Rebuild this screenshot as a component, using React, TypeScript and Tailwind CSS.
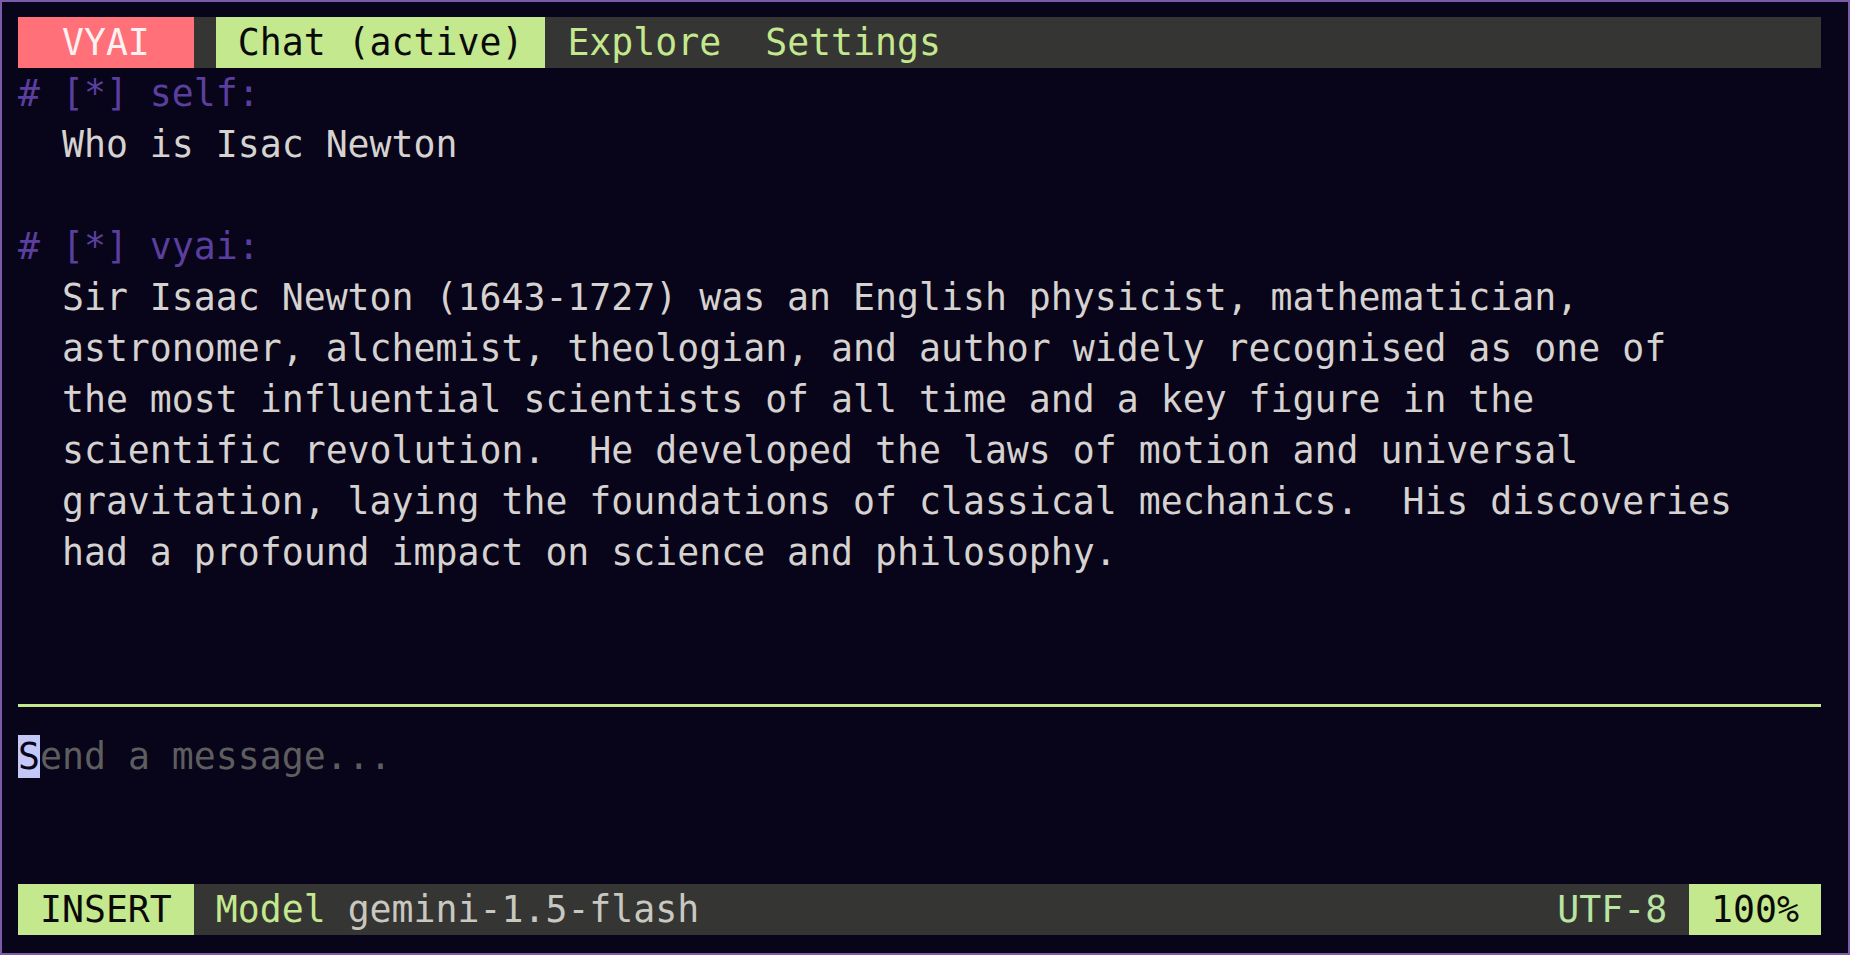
const mono = "font-['DejaVu_Sans_Mono','Liberation_Mono',monospace]";

const answer = [
  "Sir Isaac Newton (1643-1727) was an English physicist, mathematician,",
  "astronomer, alchemist, theologian, and author widely recognised as one of",
  "the most influential scientists of all time and a key figure in the",
  "scientific revolution.  He developed the laws of motion and universal",
  "gravitation, laying the foundations of classical mechanics.  His discoveries",
  "had a profound impact on science and philosophy.",
];

function Row({ children, className = "" }: { children?: React.ReactNode; className?: string }) {
  return <div className={`h-[51px] whitespace-pre ${className}`}>{children}</div>;
}

function Header({ who }: { who: string }) {
  return <Row className="text-[#5b3f9f]">{`# [*] ${who}:`}</Row>;
}

export default function App() {
  return (
    <div
      className={`h-[955px] w-[1850px] overflow-hidden border-2 border-[#7a5ca8] bg-[#08041a] pl-4 pt-[15px] text-[36.5px] leading-[51px] ${mono}`}
    >
      <div className="w-[1803px]">
        {/* Tab bar */}
        <Row className="flex bg-[#353533]">
          <span className="bg-[#ff7079] text-[#fdf1f1]">{"  VYAI  "}</span>
          <span>{" "}</span>
          <span className="bg-[#c3e88d] text-[#0a0a0a]">{" Chat (active) "}</span>
          <span className="text-[#c3e88d]">{" Explore  Settings"}</span>
        </Row>

        {/* Conversation */}
        <Header who="self" />
        <Row className="text-[#d5d2d0]">{"  Who is Isac Newton"}</Row>
        <Row />
        <Header who="vyai" />
        {answer.map((line) => (
          <Row key={line} className="text-[#d5d2d0]">{`  ${line}`}</Row>
        ))}
        <Row />
        <Row />

        {/* Divider */}
        <Row className="flex items-center">
          <div className="h-[3px] w-full bg-[#c3e88d]" />
        </Row>

        {/* Input */}
        <Row className="text-[#5e5e5e]">
          <span className="bg-[#c3c8f7] text-[#08041a]">S</span>
          {"end a message..."}
        </Row>
        <Row />
        <Row />

        {/* Status bar */}
        <Row className="flex bg-[#353533]">
          <span className="bg-[#c3e88d] text-[#0a0a0a]">{" INSERT "}</span>
          <span className="text-[#c3e88d]">{" Model "}</span>
          <span className="text-[#c9c8c0]">gemini-1.5-flash</span>
          <span className="flex-1" />
          <span className="text-[#b9e4a2]">{"UTF-8 "}</span>
          <span className="bg-[#c3e88d] text-[#0a0a0a]">{" 100% "}</span>
        </Row>
      </div>
    </div>
  );
}
